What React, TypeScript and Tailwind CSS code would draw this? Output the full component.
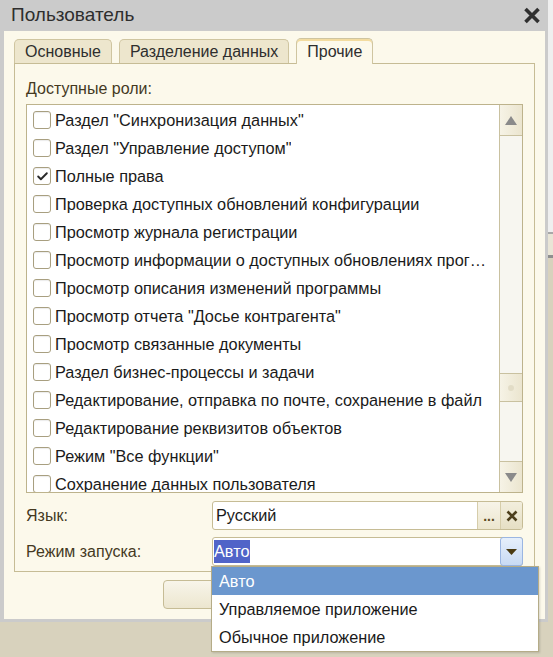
import { Check } from 'lucide-react';

const roles = [
  { name: 'Раздел "Синхронизация данных"', checked: false },
  { name: 'Раздел "Управление доступом"', checked: false },
  { name: 'Полные права', checked: true },
  { name: 'Проверка доступных обновлений конфигурации', checked: false },
  { name: 'Просмотр журнала регистрации', checked: false },
  { name: 'Просмотр информации о доступных обновлениях программы', checked: false },
  { name: 'Просмотр описания изменений программы', checked: false },
  { name: 'Просмотр отчета "Досье контрагента"', checked: false },
  { name: 'Просмотр связанные документы', checked: false },
  { name: 'Раздел бизнес-процессы и задачи', checked: false },
  { name: 'Редактирование, отправка по почте, сохранение в файл', checked: false },
  { name: 'Редактирование реквизитов объектов', checked: false },
  { name: 'Режим "Все функции"', checked: false },
  { name: 'Сохранение данных пользователя', checked: false },
];

const launchModes = ['Авто', 'Управляемое приложение', 'Обычное приложение'];

function CloseIcon() {
  return (
    <svg width="18" height="17" viewBox="0 0 18 17">
      <path d="M2.5 2 L15.5 15 M15.5 2 L2.5 15" stroke="#2f2f2f" strokeWidth="3.6" />
    </svg>
  );
}

function RoleRow({ name, checked }: { name: string; checked: boolean }) {
  return (
    <div className="flex h-[28px] shrink-0 items-center gap-[4px] pl-[6px] pr-[12px]">
      <span className="flex h-[18px] w-[18px] shrink-0 items-center justify-center rounded-[3px] border border-[#a89f80] bg-white shadow-[inset_0_1px_1px_rgba(0,0,0,0.08)]">
        {checked && <Check className="h-[13px] w-[13px] text-[#2a2a2a]" strokeWidth={3.5} />}
      </span>
      <span className="truncate text-[16.3px] text-[#1a1a1a]">{name}</span>
    </div>
  );
}

function ScrollButton({ up }: { up: boolean }) {
  return (
    <div
      className={`flex h-[31px] shrink-0 items-center justify-center bg-gradient-to-r from-[#f6f3e6] to-[#ebe5cf] ${
        up ? 'border-b' : 'border-t'
      } border-[#c9c1a0]`}
    >
      <svg width="12" height="9" viewBox="0 0 12 9">
        {up ? <path d="M6 0 L12 9 L0 9 Z" fill="#8a8a8a" /> : <path d="M0 0 L12 0 L6 9 Z" fill="#8a8a8a" />}
      </svg>
    </div>
  );
}

export default function App() {
  return (
    <div className="relative h-[657px] w-[553px] overflow-hidden bg-[#d8d2bd] font-['Liberation_Sans',Arial,sans-serif]">
      <div className="flex">
        <div className="w-[548px] bg-[#cbcbcb] pb-[3px] pl-[4px] pr-[3px]">
          <div className="flex h-[31px] items-center justify-between pl-[7px] pr-[4px]">
            <span className="text-[19px] text-[#2e2e2e]">Пользователь</span>
            <CloseIcon />
          </div>
          <div className="bg-[#fcf9eb] px-[10px] pt-[7px] pb-[10px]">
            {/* tabs */}
            <div className="flex h-[25px] items-end gap-[7px]">
              <div className="flex h-[24px] items-center rounded-t-[5px] border border-b-0 border-[#cfc5a0] bg-[#ede6cd] px-[10px] text-[16px] text-[#2e2e2e]">
                Основные
              </div>
              <div className="flex h-[24px] items-center rounded-t-[5px] border border-b-0 border-[#cfc5a0] bg-[#ede6cd] px-[10px] text-[16px] text-[#2e2e2e]">
                Разделение данных
              </div>
              <div className="relative top-[1px] flex h-[26px] items-center rounded-t-[5px] border border-b-0 border-[#cfc5a0] bg-[#fcf9eb] px-[10px] text-[16px] text-[#2e2e2e] shadow-[inset_0_2px_0_#f3dca0]">
                Прочие
              </div>
            </div>

            {/* tab panel */}
            <div className="border border-[#c6bc95] px-[11px] pt-[16px] pb-[5px]">
              <div className="h-[18px] text-[16px] leading-[18px] text-[#45391f]">Доступные роли:</div>
              <div className="mt-[6px] flex h-[389px] border border-[#bdb38c] bg-white">
                <div className="flex min-w-0 flex-1 flex-col overflow-hidden pt-[1px]">
                  {roles.map((r) => (
                    <RoleRow key={r.name} name={r.name} checked={r.checked} />
                  ))}
                </div>
                <div className="flex w-[23px] shrink-0 flex-col border-l border-[#c9c1a0] bg-[#f7f6f0]">
                  <ScrollButton up />
                  <div className="flex-1">
                    <div className="mt-[237px] flex h-[29px] items-center justify-center border-y border-[#c9c1a0] bg-gradient-to-r from-[#f6f3e6] to-[#ebe5cf]">
                      <span className="h-[6px] w-[6px] rounded-full bg-[#e2dcc6]" />
                    </div>
                  </div>
                  <ScrollButton up={false} />
                </div>
              </div>

              <div className="mt-[8px] flex items-center">
                <span className="w-[186px] text-[16px] text-[#45391f]">Язык:</span>
                <div className="flex h-[29px] flex-1 overflow-hidden rounded-[3px] border border-[#c6bc95] bg-white">
                  <span className="flex flex-1 items-center pl-[3px] text-[16.3px] text-[#1a1a1a]">Русский</span>
                  <span className="flex w-[23px] items-end justify-center border-l border-[#d6cdaa] bg-gradient-to-b from-[#f7f4e8] to-[#ece6cf] pb-[6px] text-[14px] font-bold leading-none text-[#5b4a1e]">
                    ...
                  </span>
                  <span className="flex w-[22px] items-center justify-center border-l border-[#d6cdaa] bg-gradient-to-b from-[#f2eedd] to-[#e6dfc4]">
                    <svg width="12" height="12" viewBox="0 0 12 12">
                      <path d="M1.5 1.5 L10.5 10.5 M10.5 1.5 L1.5 10.5" stroke="#4d3f1c" strokeWidth="2.6" />
                    </svg>
                  </span>
                </div>
              </div>

              <div className="mt-[7px] flex items-center">
                <span className="w-[186px] text-[16px] text-[#45391f]">Режим запуска:</span>
                <div className="flex h-[29px] flex-1 rounded-[3px] border border-[#c6bc95] bg-white">
                  <span className="flex flex-1 items-center pl-[1px]">
                    <span className="bg-[#5064c8] pr-[1px] text-[16.3px] leading-[23px] text-white">Авто</span>
                  </span>
                  <span className="-my-px -mr-px flex w-[23px] items-center justify-center rounded-[3px] border border-[#9bb6e2] bg-gradient-to-b from-[#e6effb] to-[#c8daf4]">
                    <svg width="11" height="6" viewBox="0 0 11 6">
                      <path d="M0 0 L11 0 L5.5 6 Z" fill="#4a3a12" />
                    </svg>
                  </span>
                </div>
              </div>
            </div>

            <div className="mt-[8px] flex pl-[149px]">
              <div className="h-[29px] w-[240px] rounded-[4px] border border-[#c6bc95] bg-gradient-to-b from-[#f8f5ea] to-[#ece6cf]" />
            </div>
          </div>
        </div>
        <div className="flex w-[5px] flex-col">
          <div className="h-[232px] bg-[#efefef]" />
          <div className="h-[2px] bg-[#a8a8a8]" />
          <div className="h-[21px] bg-[#e9e5d6]" />
          <div className="h-[3px] bg-[#8f8f8f]" />
        </div>
      </div>

      {/* open dropdown list */}
      <div className="absolute left-[211px] top-[566px] w-[328px] border border-[#b5ac88] bg-white shadow-[1px_1px_2px_rgba(0,0,0,0.15)]">
        {launchModes.map((m, i) => (
          <div
            key={m}
            className={`flex h-[28px] items-center pl-[7px] text-[16.3px] ${
              i === 0 ? 'bg-[#6b97ce] text-white' : 'text-[#1a1a1a]'
            }`}
          >
            {m}
          </div>
        ))}
      </div>
    </div>
  );
}
